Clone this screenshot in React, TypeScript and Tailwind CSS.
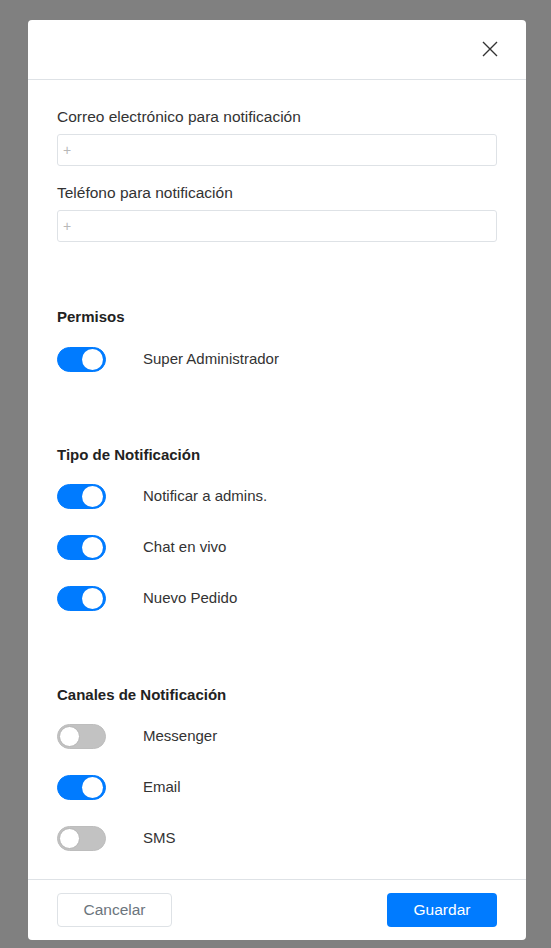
import { useState } from "react";

interface ToggleRowProps {
  label: string;
  on: boolean;
  onChange: () => void;
}

const Toggle = ({ on, onChange }: { on: boolean; onChange: () => void }) => (
  <button
    type="button"
    onClick={onChange}
    className={`relative flex h-[25px] w-[49px] shrink-0 items-center rounded-full border ${
      on ? "border-[#007bff] bg-[#007bff]" : "border-[#bdbdbd] bg-[#c2c2c2]"
    }`}
  >
    <span
      className={`absolute top-[1px] h-[21px] w-[21px] rounded-full bg-white ${
        on ? "right-[2px]" : "left-[1px] border border-[#b5b5b5]"
      }`}
    />
  </button>
);

const ToggleRow = ({ label, on, onChange }: ToggleRowProps) => (
  <div className="flex h-[25px] items-center">
    <Toggle on={on} onChange={onChange} />
    <span className="ml-[37px] text-[15px] text-[#333]">{label}</span>
  </div>
);

const App = () => {
  const [toggles, setToggles] = useState<Record<string, boolean>>({
    super: true,
    admins: true,
    chat: true,
    pedido: true,
    messenger: false,
    email: true,
    sms: false,
  });

  const flip = (key: string) =>
    setToggles((t) => ({ ...t, [key]: !t[key] }));

  return (
    <div
      className="min-h-[948px] bg-[#808080] pt-[20px]"
      style={{ fontFamily: '"Liberation Sans", Arial, sans-serif' }}
    >
      <div className="ml-[28px] w-[498px] overflow-hidden rounded-[4px] bg-white">
        {/* Header */}
        <div className="flex h-[60px] items-center justify-end border-b border-[#dee2e6] px-[28px]">
          <button type="button" className="mb-[2px] text-[#333]">
            <svg width="16" height="16" viewBox="0 0 16 16" fill="none">
              <path
                d="M1 1 L15 15 M15 1 L1 15"
                stroke="currentColor"
                strokeWidth="1.4"
              />
            </svg>
          </button>
        </div>

        {/* Body */}
        <div className="px-[29px] pt-[26px] pb-[28px]">
          <label className="mb-[6px] block text-[15.5px] leading-[22px] text-[#333]">
            Correo electrónico para notificación
          </label>
          <input
            placeholder="+"
            className="block h-[32px] w-full rounded-[3px] border border-[#dee2e6] px-[5px] text-[14px] placeholder:text-[#b8b8b8] focus:outline-none"
          />
          <label className="mt-4 mb-[6px] block text-[15.5px] leading-[22px] text-[#333]">
            Teléfono para notificación
          </label>
          <input
            placeholder="+"
            className="block h-[32px] w-full rounded-[3px] border border-[#dee2e6] px-[5px] text-[14px] placeholder:text-[#b8b8b8] focus:outline-none"
          />

          <h3 className="mt-[64px] mb-[19px] text-[15px] font-bold leading-[22px] text-[#222]">
            Permisos
          </h3>
          <ToggleRow
            label="Super Administrador"
            on={toggles.super}
            onChange={() => flip("super")}
          />

          <h3 className="mt-[72px] mb-[18px] text-[15px] font-bold leading-[22px] text-[#222]">
            Tipo de Notificación
          </h3>
          <div className="flex flex-col gap-[26px]">
            <ToggleRow
              label="Notificar a admins."
              on={toggles.admins}
              onChange={() => flip("admins")}
            />
            <ToggleRow
              label="Chat en vivo"
              on={toggles.chat}
              onChange={() => flip("chat")}
            />
            <ToggleRow
              label="Nuevo Pedido"
              on={toggles.pedido}
              onChange={() => flip("pedido")}
            />
          </div>

          <h3 className="mt-[73px] mb-[18px] text-[15px] font-bold leading-[22px] text-[#222]">
            Canales de Notificación
          </h3>
          <div className="flex flex-col gap-[26px]">
            <ToggleRow
              label="Messenger"
              on={toggles.messenger}
              onChange={() => flip("messenger")}
            />
            <ToggleRow
              label="Email"
              on={toggles.email}
              onChange={() => flip("email")}
            />
            <ToggleRow
              label="SMS"
              on={toggles.sms}
              onChange={() => flip("sms")}
            />
          </div>
        </div>

        {/* Footer */}
        <div className="flex items-center justify-between border-t border-[#dee2e6] px-[29px] py-[13px]">
          <button
            type="button"
            className="h-[34px] w-[115px] rounded-[4px] border border-[#dee2e6] text-[15.5px] text-[#6c757d]"
          >
            Cancelar
          </button>
          <button
            type="button"
            className="h-[34px] w-[110px] rounded-[4px] bg-[#007bff] text-[15.5px] text-white"
          >
            Guardar
          </button>
        </div>
      </div>
    </div>
  );
};

export default App;
